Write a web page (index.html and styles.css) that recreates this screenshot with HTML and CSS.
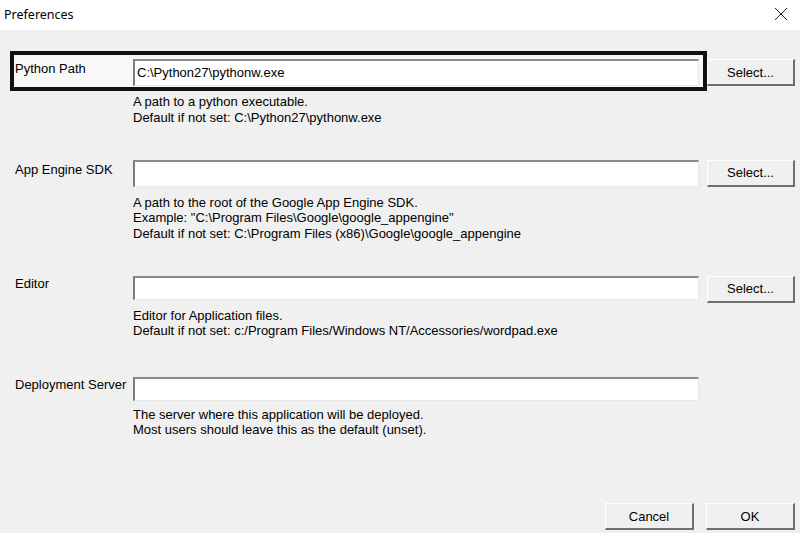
FILE: index.html
```html
<!DOCTYPE html>
<html>
<head>
<meta charset="utf-8">
<link rel="stylesheet" href="styles.css">
<title>Preferences</title>
</head>
<body>
<div class="dialog">
  <div class="titlebar">
    <span class="title">Preferences</span>
    <svg class="close" width="14" height="14" viewBox="0 0 14 14"><path d="M1 1 L13 13 M13 1 L1 13" stroke="#222" stroke-width="1" fill="none"/></svg>
  </div>
  <div class="content">
    <div class="row">
      <div class="line">
        <div class="field focused">
          <span class="label">Python Path</span>
          <div class="input">C:\Python27\pythonw.exe</div>
        </div>
        <button class="btn select">Select...</button>
      </div>
      <div class="help">A path to a python executable.<br>Default if not set: C:\Python27\pythonw.exe</div>
    </div>
    <div class="row">
      <div class="line">
        <div class="field">
          <span class="label">App Engine SDK</span>
          <div class="input"></div>
        </div>
        <button class="btn select">Select...</button>
      </div>
      <div class="help">A path to the root of the Google App Engine SDK.<br>Example: "C:\Program Files\Google\google_appengine"<br>Default if not set: C:\Program Files (x86)\Google\google_appengine</div>
    </div>
    <div class="row">
      <div class="line">
        <div class="field short">
          <span class="label">Editor</span>
          <div class="input"></div>
        </div>
        <button class="btn select">Select...</button>
      </div>
      <div class="help">Editor for Application files.<br>Default if not set: c:/Program Files/Windows NT/Accessories/wordpad.exe</div>
    </div>
    <div class="row last">
      <div class="line">
        <div class="field short">
          <span class="label">Deployment Server</span>
          <div class="input"></div>
        </div>
      </div>
      <div class="help tight">The server where this application will be deployed.<br>Most users should leave this as the default (unset).</div>
    </div>
  </div>
  <div class="footer">
    <button class="btn action">Cancel</button>
    <button class="btn action">OK</button>
  </div>
</div>
</body>
</html>
```
FILE: styles.css
```css
html, body {
  margin: 0;
  padding: 0;
}
body {
  width: 800px;
  height: 533px;
  background: #f0f0f0;
  font-family: "Liberation Sans", Arial, sans-serif;
  font-size: 13px;
  color: #000;
  overflow: hidden;
}
.dialog {
  height: 533px;
  display: flex;
  flex-direction: column;
}
.titlebar {
  height: 30px;
  background: #fff;
  display: flex;
  align-items: center;
  justify-content: space-between;
  padding: 0 12px 0 4px;
  flex-shrink: 0;
}
.title {
  font-family: "Noto Sans", "Open Sans", sans-serif;
  font-size: 12.5px;
  color: #000;
  position: relative;
  top: -1px;
}
.close {
  position: relative;
  top: -1px;
}
.content {
  padding: 21px 0 0 10px;
  display: flex;
  flex-direction: column;
  gap: 26.5px;
}
.row.last {
  margin-top: 3.5px;
}
.line {
  display: flex;
  align-items: flex-start;
}
.field {
  display: flex;
  align-items: flex-start;
  border: 4px solid transparent;
  padding: 4px 4px 1px 1px;
}
.field.focused {
  border-color: #111;
  background: #f8f8f8;
}
.label {
  width: 118px;
  flex-shrink: 0;
  padding-top: 2px;
  line-height: 15px;
}
.field.short .label {
  padding-top: 0;
}
.input {
  width: 566px;
  height: 27px;
  box-sizing: border-box;
  background: #fff;
  border-style: solid;
  border-width: 2px 1px 1px 2px;
  border-color: #8a8a8a #e8e8e8 #e8e8e8 #7a7a82;
  padding: 0 2px;
  line-height: 24px;
  white-space: nowrap;
}
.field.short .input {
  height: 24px;
}
.btn {
  font-family: "Liberation Sans", Arial, sans-serif;
  font-size: 13px;
  color: #000;
  background: #f0f0f0;
  height: 27px;
  box-sizing: border-box;
  border-style: solid;
  border-width: 1px 2px 2px 1px;
  border-color: #ffffff #6e6e6e #6e6e6e #ffffff;
  padding: 0;
  margin: 0;
}
.select {
  width: 88px;
  margin-top: 8px;
}
.help {
  margin: 3px 0 0 123px;
  line-height: 15.5px;
}
.help.tight {
  margin-top: 1px;
}
.footer {
  margin-top: auto;
  display: flex;
  justify-content: flex-end;
  gap: 12px;
  padding: 0 5px 3px 0;
}
.action {
  width: 89px;
}
```
